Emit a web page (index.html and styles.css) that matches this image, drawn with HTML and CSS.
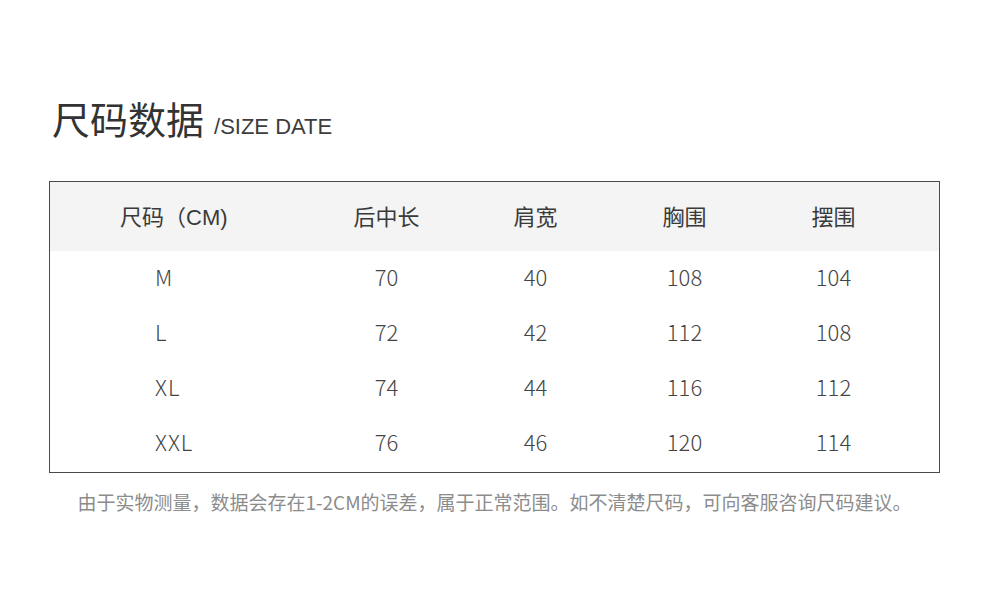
FILE: index.html
```html
<!DOCTYPE html>
<html lang="zh-CN">
<head>
<meta charset="utf-8">
<title>尺码数据</title>
<link rel="stylesheet" href="styles.css">
</head>
<body>
<div class="page">
  <h1 class="title"><span class="title-cn">尺码数据</span><span class="title-en">/SIZE DATE</span></h1>
  <div class="table">
    <div class="row head">
      <div class="cell first">尺码（CM)</div>
      <div class="cell">后中长</div>
      <div class="cell">肩宽</div>
      <div class="cell">胸围</div>
      <div class="cell">摆围</div>
    </div>
    <div class="row">
      <div class="cell first">M</div>
      <div class="cell">70</div>
      <div class="cell">40</div>
      <div class="cell">108</div>
      <div class="cell">104</div>
    </div>
    <div class="row">
      <div class="cell first">L</div>
      <div class="cell">72</div>
      <div class="cell">42</div>
      <div class="cell">112</div>
      <div class="cell">108</div>
    </div>
    <div class="row">
      <div class="cell first">XL</div>
      <div class="cell">74</div>
      <div class="cell">44</div>
      <div class="cell">116</div>
      <div class="cell">112</div>
    </div>
    <div class="row">
      <div class="cell first">XXL</div>
      <div class="cell">76</div>
      <div class="cell">46</div>
      <div class="cell">120</div>
      <div class="cell">114</div>
    </div>
  </div>
  <p class="note">由于实物测量，数据会存在1-2CM的误差，属于正常范围。如不清楚尺码，可向客服咨询尺码建议。</p>
</div>
</body>
</html>
```

FILE: styles.css
```css
html, body {
  margin: 0;
  padding: 0;
  background: #ffffff;
}

body {
  font-family: "Noto Sans CJK SC", "Noto Sans", sans-serif;
  color: #3a3a3a;
}

.page {
  width: 891px;
  padding: 96px 0 0 49px;
}

.title {
  margin: 0 0 0 3px;
  display: flex;
  align-items: baseline;
  font-weight: 400;
  line-height: 44px;
  height: 44px;
}

.title-cn {
  font-size: 38px;
  color: #333333;
}

.title-en {
  font-family: "Liberation Sans", "Noto Sans CJK SC", sans-serif;
  font-size: 22px;
  margin-left: 10px;
  color: #3d3d3d;
}

.table {
  margin-top: 41px;
  border: 1px solid #4a4a4a;
  padding-bottom: 1px;
}

.row {
  display: grid;
  grid-template-columns: 262px repeat(4, 149px) 1fr;
  height: 55px;
  align-items: center;
  font-size: 22px;
  font-weight: 300;
  color: #444444;
}

.row .cell {
  padding-bottom: 6px;
}

.row.head {
  height: 69px;
  background: #f4f4f4;
  font-family: "Liberation Sans", "Noto Sans CJK SC", sans-serif;
  font-size: 22px;
  font-weight: 400;
  color: #3a3a3a;
}

.row.head .cell {
  padding-bottom: 4px;
}

.cell {
  text-align: center;
}

.cell.first {
  text-align: left;
  padding-left: 105px;
  letter-spacing: 1px;
}

.row.head .cell.first {
  padding-left: 70px;
  letter-spacing: 0;
}

.note {
  margin: 14px 0 0;
  text-align: center;
  font-size: 19px;
  line-height: 30px;
  color: #8c8c8c;
}
```
